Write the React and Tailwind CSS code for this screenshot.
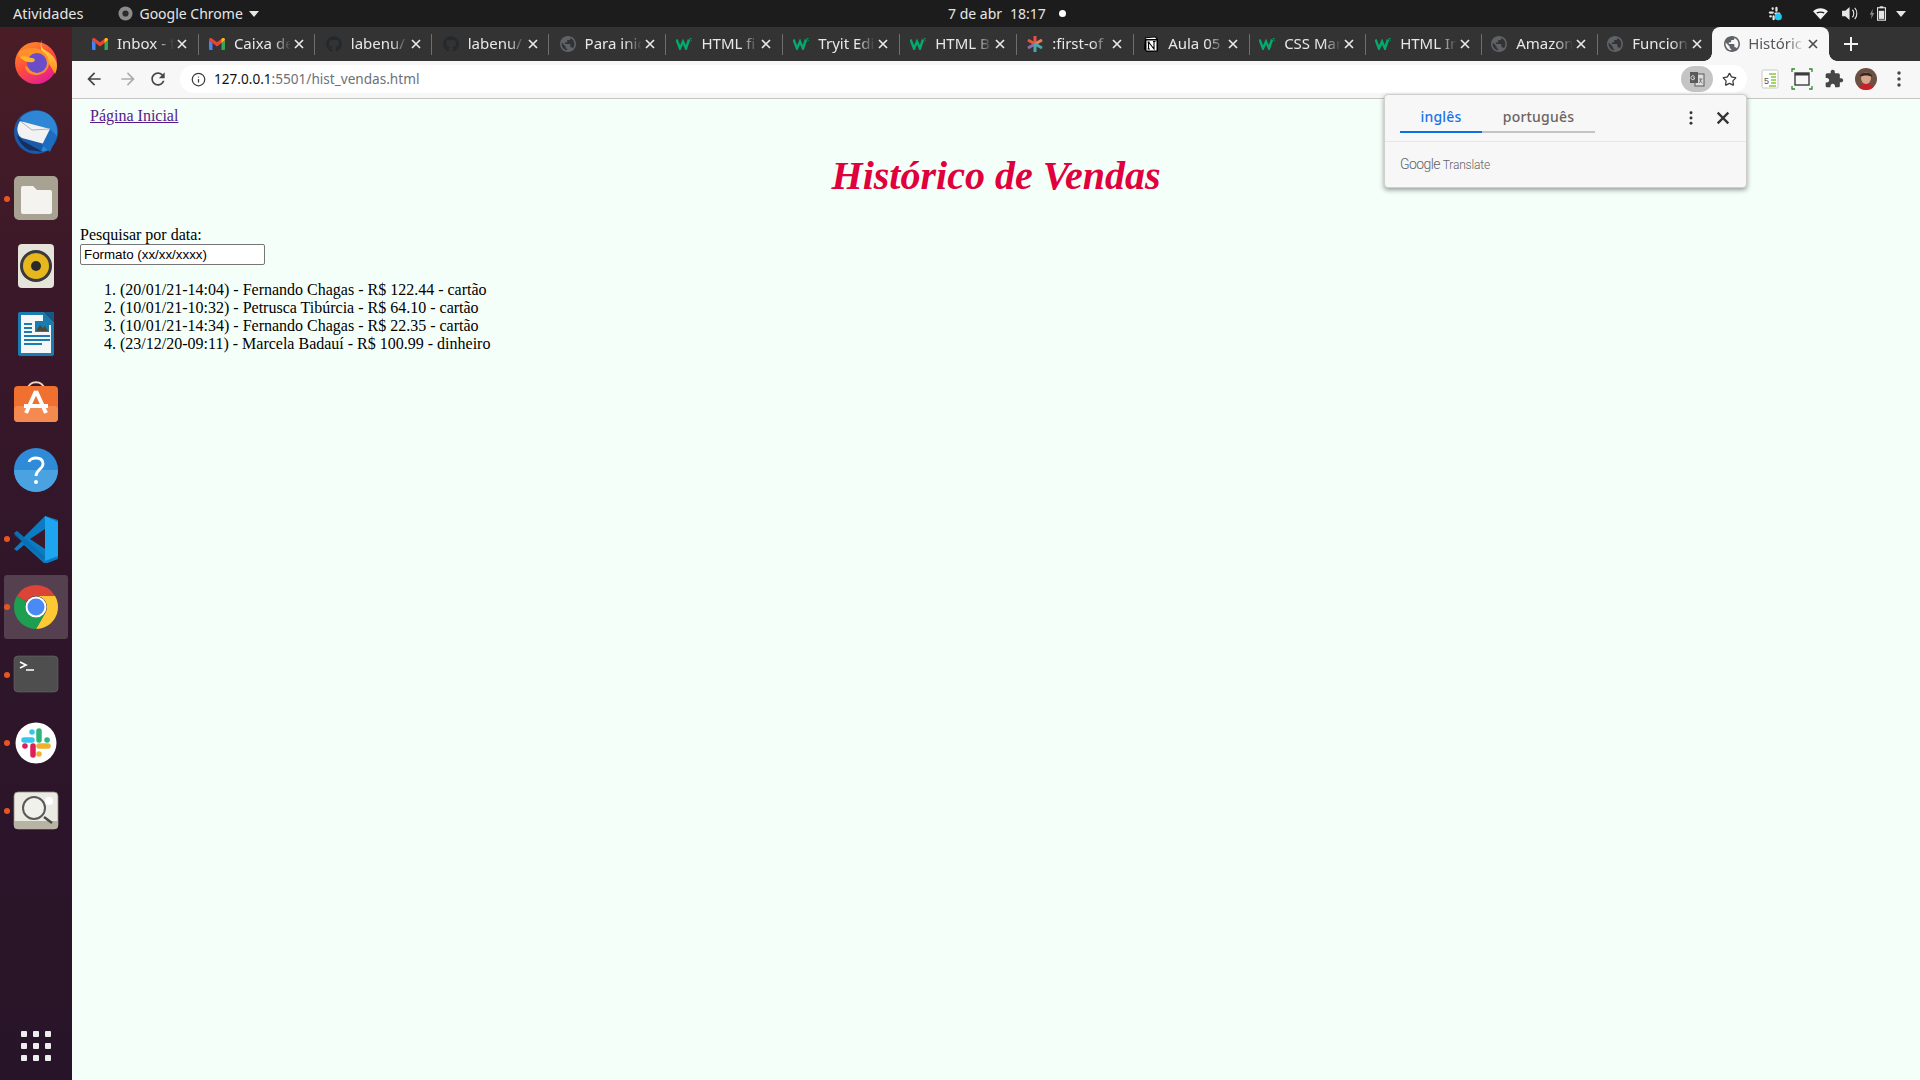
import React from 'react';
import { Star, Info } from 'lucide-react';
import { FaGithub } from 'react-icons/fa';

const GLOBE =
  'M12 2C6.48 2 2 6.48 2 12s4.48 10 10 10 10-4.48 10-10S17.52 2 12 2zm-1 17.93c-3.95-.49-7-3.85-7-7.93 0-.62.08-1.21.21-1.79L9 15v1c0 1.1.9 2 2 2v1.93zm6.9-2.54c-.26-.81-1-1.39-1.9-1.39h-1v-3c0-.55-.45-1-1-1H8v-2h2c.55 0 1-.45 1-1V7h2c1.1 0 2-.9 2-2v-.41c2.93 1.19 5 4.06 5 7.41 0 2.08-.8 3.97-2.1 5.39z';

const Globe = () => (
  <svg viewBox="2 2 20 20" className="w-4 h-4" fill="#5f6368">
    <path d={GLOBE} />
  </svg>
);

const Gmail = () => (
  <svg viewBox="0 0 16 12" className="w-4 h-3">
    <path d="M0 2v9a1 1 0 0 0 1 1h2.500V5z" fill="#4285f4" />
    <path d="M16 2v9a1 1 0 0 1-1 1h-2.500V5z" fill="#34a853" />
    <path d="M0 2c0-2 2-2.400 3-1.600L8 4.200 13 .4c1-.8 3-.4 3 1.600L12.500 5 8 8.400 3.500 5z" fill="#ea4335" />
    <path d="M12.500 1.100 13 .4c1-.8 3-.4 3 1.600l-3.500 3z" fill="#fbbc04" />
  </svg>
);

const W3 = () => (
  <svg viewBox="0 0 16 12" className="w-4 h-3">
    <path d="M0.500 1.500 4 10.500 7 3.500 10 10.500 13 1.500" fill="none" stroke="#04aa6d" strokeWidth="2.400" />
    <path d="M13.500 0.500h2l-1 1 1 1-1 .8" fill="none" stroke="#04aa6d" strokeWidth="0.700" />
  </svg>
);

const Snow = () => (
  <svg viewBox="0 0 16 16" className="w-4 h-4" strokeWidth="3">
    <path d="M8 0v8" stroke="#e8543f" />
    <path d="M1 4l7 4" stroke="#e8543f" />
    <path d="M15 4L8 8" stroke="#e87c5f" />
    <path d="M1 12l7-4" stroke="#8f6aa8" />
    <path d="M15 12L8 8" stroke="#4aa8a8" />
    <path d="M8 16V8" stroke="#4aa8a8" />
  </svg>
);

const Notion = () => (
  <svg viewBox="0 0 16 16" className="w-4 h-4">
    <path d="M2 1.500 12.500 .5 15 3v12.500L3.500 16 1 13z" fill="#000" />
    <path d="M3.500 4.500h10v10h-10zM2.500 2.200l9.500-.7 1.500 1.500h-10z" fill="#fff" />
    <path d="M5.500 13V6M5.500 6l5.500 7V5.500M4.500 13h2.500M4.500 6H6.500M10 5.500h2.500" stroke="#000" strokeWidth="1.100" fill="none" />
  </svg>
);

const Github = () => <FaGithub className="w-4 h-4 text-[#24292e]" />;

const tabs = [
  { title: 'Inbox - f', icon: <Gmail />, wide: true },
  { title: 'Caixa de', icon: <Gmail />, wide: true },
  { title: 'labenu/', icon: <Github />, wide: true },
  { title: 'labenu/', icon: <Github />, wide: true },
  { title: 'Para inic', icon: <Globe />, wide: true },
  { title: 'HTML fi', icon: <W3 />, wide: true },
  { title: 'Tryit Edi', icon: <W3 />, wide: true },
  { title: 'HTML B', icon: <W3 />, wide: true },
  { title: ':first-of', icon: <Snow /> },
  { title: 'Aula 05', icon: <Notion /> },
  { title: 'CSS Mar', icon: <W3 /> },
  { title: 'HTML In', icon: <W3 /> },
  { title: 'Amazon', icon: <Globe /> },
  { title: 'Funcion', icon: <Globe /> },
  { title: 'Históric', icon: <Globe />, active: true },
];

const sales = [
  '(20/01/21-14:04) - Fernando Chagas - R$ 122.44 - cartão',
  '(10/01/21-10:32) - Petrusca Tibúrcia - R$ 64.10 - cartão',
  '(10/01/21-14:34) - Fernando Chagas - R$ 22.35 - cartão',
  '(23/12/20-09:11) - Marcela Badauí - R$ 100.99 - dinheiro',
];

const CloseIcon = ({ color = '#e8e8e8', size = 'w-3 h-3' }) => (
  <svg viewBox="0 0 12 12" className={size} fill="none" stroke={color} strokeWidth="1.700">
    <path d="M2 2l8 8M10 2l-8 8" />
  </svg>
);

const Tab = ({ title, icon, active, wide, last }) => {
  if (active) {
    return (
      <div className="relative flex items-center shrink-0 h-full w-[117px] -ml-[4px] pl-[12px] bg-[#f7f7f7] rounded-t-[8px]">
        <div className="absolute -left-[8px] bottom-0 w-2 h-2 bg-[radial-gradient(circle_at_0_0,#333333_7.500px,#f7f7f7_8px)]" />
        <div className="absolute -right-[8px] bottom-0 w-2 h-2 bg-[radial-gradient(circle_at_100%_0,#333333_7.500px,#f7f7f7_8px)]" />
        <span className="flex justify-center w-4 shrink-0">{icon}</span>
        <span className="ml-[8px] w-[57px] pb-[2px] whitespace-nowrap text-[15px] text-[#55585c] [mask-image:linear-gradient(to_right,black_70%,transparent)]">
          {title}
        </span>
        <span className="flex justify-center w-4 shrink-0">
          <CloseIcon color="#4a4d50" />
        </span>
      </div>
    );
  }
  return (
    <div className={`flex items-center shrink-0 h-full pl-[7px] ${wide ? 'w-[116.9px]' : 'w-[116px]'}`}>
      <span className="flex justify-center w-4 shrink-0">{icon}</span>
      <span className="ml-[9px] w-[57px] pb-[2px] whitespace-nowrap text-[15px] text-[#e8e8e8] [mask-image:linear-gradient(to_right,black_70%,transparent)]">
        {title}
      </span>
      <span className="flex justify-center w-4 shrink-0">
        <CloseIcon />
      </span>
      {!last && <span className="ml-[7.500px] w-px h-[21px] bg-[#6e6e6e] shrink-0" />}
    </div>
  );
};

const TopBar = () => (
  <div className="flex items-center h-[27px] bg-[#1c1c1c] text-[#e6e6e6] text-[14px]">
    <div className="flex items-center w-[948px] shrink-0 pl-[13px]">
      <span className="text-[14.500px]">Atividades</span>
      <svg viewBox="0 0 16 16" className="w-[15px] h-[15px] ml-[35px]">
        <circle cx="8" cy="8" r="7.500" fill="#8b8b8b" />
        <circle cx="8" cy="8" r="3.300" fill="#2c2c2c" />
      </svg>
      <span className="ml-[6px]">Google Chrome</span>
      <svg viewBox="0 0 10 6" className="w-[10px] h-[6px] ml-[6px]" fill="#e6e6e6">
        <path d="M0 0h10L5 6z" />
      </svg>
    </div>
    <span>7 de abr</span>
    <span className="ml-[8px]">18:17</span>
    <span className="ml-[13px] w-[7px] h-[7px] rounded-full bg-white" />
    <div className="flex items-center ml-auto pr-[14px]">
      <svg viewBox="0 0 16 16" className="w-[15px] h-[15px]">
        <g stroke="#e6e6e6" strokeWidth="2.400" strokeLinecap="round">
          <path d="M5 2.500v.5M9 2v3M2 7h3M8 8h4M6 11v3M2.500 11h.5" />
        </g>
        <circle cx="11" cy="11.500" r="3.800" fill="#1ec8f0" />
      </svg>
      <svg viewBox="0 0 16 14" className="w-[15px] h-[13px] ml-[30px]" fill="#f2f2f2">
        <path d="M0 4.500C4.500.2 11.500.2 16 4.500L8 13.500z" />
        <path d="M3.500 6c2.500-1.500 6.500-1.500 9 0l-1 1c-2-1-5-1-7 0z" fill="#1c1c1c" />
      </svg>
      <svg viewBox="0 0 18 16" className="w-[17px] h-[15px] ml-[14px]" fill="#e6e6e6">
        <path d="M0 5h3.500L8 1v14l-4.500-4H0z" />
        <path d="M11 4c2 2 2 6 0 8M13.500 2c3 3 3 9 0 12" fill="none" stroke="#e6e6e6" strokeWidth="1.200" />
      </svg>
      <svg viewBox="0 0 8 14" className="w-[6px] h-[12px] ml-[10px]" fill="#8a8a8a">
        <path d="M5 0 1 8h2.500L2.500 14 7 5.500H4.500z" />
      </svg>
      <svg viewBox="0 0 10 16" className="w-[9px] h-[15px] ml-[2px]">
        <rect x="3" y="0" width="4" height="2" fill="#e6e6e6" />
        <rect x="0.600" y="1.600" width="8.800" height="13.800" fill="none" stroke="#e6e6e6" strokeWidth="1.200" />
        <rect x="2" y="5" width="6" height="9" fill="#e6e6e6" />
      </svg>
      <svg viewBox="0 0 10 6" className="w-[10px] h-[6px] ml-[10px]" fill="#e6e6e6">
        <path d="M0 0h10L5 6z" />
      </svg>
    </div>
  </div>
);

const TabStrip = () => (
  <div className="flex items-center h-[34px] bg-[#333333] pl-[13px]">
    {tabs.map((tab, i) => (
      <Tab key={i} {...tab} last={tabs[i + 1] && tabs[i + 1].active} />
    ))}
    <svg viewBox="0 0 14 14" className="w-[14px] h-[14px] ml-[15px]" fill="none" stroke="#f2f2f2" strokeWidth="2">
      <path d="M7 0v14M0 7h14" />
    </svg>
  </div>
);

const Toolbar = () => (
  <div className="flex items-center h-[38px] bg-[#f7f7f7] border-b border-[#c4c7c5] pb-px pl-[12px] pr-[19px]">
    <svg viewBox="0 0 24 24" className="w-5 h-5 shrink-0" fill="#454545">
      <path d="M20 11H7.830l5.590-5.590L12 4l-8 8 8 8 1.410-1.410L7.830 13H20v-2z" />
    </svg>
    <svg viewBox="0 0 24 24" className="w-5 h-5 ml-[14px] shrink-0 -scale-x-100" fill="#adadad">
      <path d="M20 11H7.830l5.590-5.590L12 4l-8 8 8 8 1.410-1.410L7.830 13H20v-2z" />
    </svg>
    <svg viewBox="0 0 24 24" className="w-5 h-5 ml-[10px] shrink-0" fill="#454545">
      <path d="M17.650 6.350C16.200 4.900 14.210 4 12 4c-4.420 0-7.990 3.580-7.990 8s3.570 8 7.990 8c3.730 0 6.840-2.550 7.730-6h-2.080c-.82 2.330-3.040 4-5.650 4-3.310 0-6-2.690-6-6s2.690-6 6-6c1.660 0 3.140.69 4.220 1.780L13 11h7V4l-2.350 2.350z" />
    </svg>
    <div className="flex items-center flex-1 h-[28px] ml-[12px] rounded-full bg-white pl-[11px] pr-[1px]">
      <Info className="w-[15px] h-[15px] text-[#3c3c3c]" strokeWidth={2} />
      <span className="ml-[8px] text-[13.600px] text-[#6b7177]">
        <span className="text-[#111]">127.0.0.1</span>:5501/hist_vendas.html
      </span>
      <div className="flex items-center justify-center w-[32px] h-[26px] ml-auto rounded-full bg-[#c4c4c4]">
        <svg viewBox="0 0 16 16" className="w-4 h-4">
          <rect x="6" y="3" width="9" height="12" fill="#dcdcdc" stroke="#5a5a5a" />
          <rect x="1" y="1" width="8" height="11" fill="#5a5a5a" />
          <path d="M7 5.500A2 2 0 1 0 7 8V6.800H5.500" transform="translate(-1.500 0)" fill="none" stroke="#dcdcdc" />
          <path d="M10 8h3.500M12 8c-.3 2-1 3-2 4M11 9c.5 1.500 1.200 2.200 2.500 3" fill="none" stroke="#5a5a5a" strokeWidth="0.800" />
        </svg>
      </div>
      <Star className="w-[15px] h-[15px] ml-[9px] mr-[9px] text-[#3c3c3c]" strokeWidth={2} />
    </div>
    <svg viewBox="0 0 22 22" className="w-[22px] h-[22px] ml-[12px] shrink-0">
      <rect x="3" y="2" width="16" height="18" rx="1.500" fill="#fff" stroke="#c8c8c8" />
      <path d="M10 6h7M12 9h5M12 12h5M12 15h5M10 18h7" stroke="#8cc63f" strokeWidth="1.500" />
      <text x="5" y="16" fontSize="9" fontFamily="Liberation Sans" fill="#555">5</text>
    </svg>
    <svg viewBox="0 0 22 22" className="w-[22px] h-[22px] ml-[10px] shrink-0" fill="none">
      <rect x="4" y="5" width="14" height="12" stroke="#3c3c3c" strokeWidth="1.400" />
      <path d="M4 5h14v2.500H4z" fill="#3c3c3c" />
      <path d="M1 4V1h3M18 1h3v3M21 18v3h-3M4 21H1v-3" stroke="#2e8b2e" strokeWidth="1.300" />
    </svg>
    <svg viewBox="0 0 24 24" className="w-[20px] h-[20px] mx-[11px] shrink-0" fill="#454545">
      <path d="M20.500 11H19V7c0-1.100-.9-2-2-2h-4V3.500C13 2.120 11.880 1 10.500 1S8 2.120 8 3.500V5H4c-1.100 0-1.990.9-1.990 2v3.800H3.500c1.490 0 2.700 1.210 2.700 2.700s-1.210 2.700-2.700 2.700H2V20c0 1.100.9 2 2 2h3.800v-1.500c0-1.490 1.210-2.700 2.700-2.700 1.490 0 2.700 1.210 2.700 2.700V22H17c1.100 0 2-.9 2-2v-4h1.500c1.380 0 2.500-1.120 2.500-2.500S21.880 11 20.500 11z" />
    </svg>
    <svg viewBox="0 0 22 22" className="w-[22px] h-[22px] shrink-0">
      <clipPath id="avatar">
        <circle cx="11" cy="11" r="11" />
      </clipPath>
      <g clipPath="url(#avatar)">
        <rect width="22" height="22" fill="#6b5044" />
        <path d="M2 22c1-5 5-6 9-6s8 1 9 6z" fill="#c8202c" />
        <ellipse cx="11" cy="10" rx="5" ry="6" fill="#d8a58c" />
        <path d="M5 9c0-6 12-6 12 0-3-2-9-2-12 0z" fill="#3a2820" />
      </g>
    </svg>
    <svg viewBox="0 0 4 16" className="w-1 h-4 ml-[20px] shrink-0" fill="#454545">
      <circle cx="2" cy="2" r="1.700" />
      <circle cx="2" cy="8" r="1.700" />
      <circle cx="2" cy="14" r="1.700" />
    </svg>
  </div>
);

const TranslatePopup = () => (
  <div className="absolute top-[94px] left-[1384px] w-[363px] h-[94px] rounded-[4px] border border-[#cfcfcf] bg-[#f7f7f7] shadow-[0_2px_5px_rgba(0,0,0,0.4)]">
    <div className="flex items-start h-[47px] pl-[15px] border-b border-[#e6e6e6]">
      <div className="flex w-[195px] h-[38px] border-b-2 border-[#c4c4c4]">
        <div className="w-[82px] h-[38px] border-b-2 border-[#0a6fe8] pt-[10px] text-center text-[14px] leading-[24px] font-medium tracking-[0.2px] text-[#1a73e8]">
          inglês
        </div>
        <div className="w-[113px] pt-[10px] text-center text-[14px] leading-[24px] font-medium tracking-[0.2px] text-[#6b6460]">
          português
        </div>
      </div>
      <svg viewBox="0 0 4 16" className="w-1 h-[14px] ml-[94px] mt-[16px]" fill="#333">
        <circle cx="2" cy="2" r="1.700" />
        <circle cx="2" cy="8" r="1.700" />
        <circle cx="2" cy="14" r="1.700" />
      </svg>
      <span className="ml-[22px] mt-[15px]">
        <CloseIcon color="#333" size="w-4 h-4" />
      </span>
    </div>
    <div className="flex items-baseline pl-[15px] pt-[13px] text-[#5f6368] leading-[18px] font-['Roboto',sans-serif]">
      <span className="text-[14px] font-light tracking-[-0.6px]">Google</span>
      <span className="ml-[3px] text-[12px] font-light tracking-[-0.2px]">Translate</span>
    </div>
  </div>
);

const Firefox = () => (
  <svg viewBox="0 0 48 48" className="w-[48px] h-[48px]">
    <defs>
      <linearGradient id="ffo" x1="0" y1="0" x2="0.600" y2="1">
        <stop offset="0" stopColor="#ff9a1f" />
        <stop offset="0.550" stopColor="#ff4d3d" />
        <stop offset="1" stopColor="#e5208f" />
      </linearGradient>
      <linearGradient id="ffy" x1="0" y1="0" x2="0" y2="1">
        <stop offset="0" stopColor="#ffe64d" />
        <stop offset="1" stopColor="#ff8a1f" />
      </linearGradient>
    </defs>
    <circle cx="24" cy="24" r="21" fill="url(#ffo)" />
    <path d="M30 1c-2 6 0 9 6 12 6 4 9 9 9 14 0 3-1 6-2 8l-14-24c0-4-1-7 1-10z" fill="url(#ffy)" />
    <path d="M6 14c4-3 8-5 14-5 9 0 17 6 17 15 0 7-6 12-13 12-6 0-11-4-11-9 4 2 8 0 8-3l-5-2c-4 0-8-2-10-8z" fill="#ff8f2a" />
    <circle cx="25" cy="24" r="10" fill="#6b4cc9" />
    <path d="M8 18c5-2 9 1 12 1 3 0 4 3 1 4-4 1-8 0-13-5z" fill="#ffb52e" />
  </svg>
);

const Thunderbird = () => (
  <svg viewBox="0 0 48 48" className="w-[48px] h-[48px]">
    <circle cx="24" cy="25" r="22" fill="#1a5aa8" />
    <path d="M8 12c6-8 18-11 28-5 7 5 10 12 9 22l-8 14-8 2 4-12z" fill="#2f86d4" />
    <path d="M8 14l30 8-2 16-26-7c-4-2-7-9-2-17z" fill="#f2f2f2" />
    <path d="M8 14l12 9 18-1" fill="none" stroke="#aab4c0" strokeWidth="1" />
    <path d="M30 38l8 7 7-16-7-7z" fill="#1c6cc0" />
    <path d="M5 28c2 7 6 12 12 15l14 2-20-11z" fill="#162e5e" />
  </svg>
);

const Files = () => (
  <svg viewBox="0 0 48 48" className="w-[48px] h-[48px]">
    <rect x="2" y="1" width="44" height="44" rx="5" fill="#a8a293" />
    <path d="M9 13a2 2 0 0 1 2-2h10l4 4h13a2 2 0 0 1 2 2v20a2 2 0 0 1-2 2H11a2 2 0 0 1-2-2z" fill="#f5f3f0" />
  </svg>
);

const Rhythmbox = () => (
  <svg viewBox="0 0 48 48" className="w-[48px] h-[48px]">
    <rect x="6" y="1" width="36" height="44" rx="4" fill="#e6e3da" />
    <circle cx="24" cy="23" r="16" fill="#3a3a3a" />
    <circle cx="24" cy="23" r="13" fill="#e7b71e" />
    <circle cx="24" cy="23" r="5" fill="#2a2a2a" />
  </svg>
);

const Writer = () => (
  <svg viewBox="0 0 48 48" className="w-[48px] h-[48px]">
    <path d="M8 1h24l10 10v32a2 2 0 0 1-2 2H8a2 2 0 0 1-2-2V3a2 2 0 0 1 2-2z" fill="#1b7cb0" />
    <path d="M9 4h22v10h8v28H9z" fill="#f4f6f8" />
    <path d="M32 1h10v10z" fill="#125a85" />
    <path d="M12 13h8M12 17h8M12 21h8M12 25h26M12 29h26M12 33h18" stroke="#1b7cb0" strokeWidth="1.800" />
    <rect x="23" y="10" width="14" height="11" fill="#1b7cb0" />
    <path d="M24 20l4-6 3 3 2-2 3 5z" fill="#4a4a3a" />
  </svg>
);

const AppStore = () => (
  <svg viewBox="0 0 48 48" className="w-[48px] h-[48px]">
    <path d="M16 10c0-9 16-9 16 0" fill="none" stroke="#e8d9c0" strokeWidth="2" />
    <rect x="2" y="7" width="44" height="36" rx="4" fill="#f07030" />
    <rect x="2" y="27" width="44" height="16" rx="4" fill="#f48a50" />
    <path d="M24 12 14 34M24 12l10 22M12 27h24" stroke="#fff" strokeWidth="4" fill="none" />
  </svg>
);

const Help = () => (
  <svg viewBox="0 0 48 48" className="w-[48px] h-[48px]">
    <circle cx="24" cy="23" r="22" fill="#2f8bd8" />
    <path d="M2 23a22 22 0 0 0 44 0z" fill="#4aa3e0" />
    <path d="M17 15c1-5 13-6 14 1 1 6-7 6-7 13" fill="none" stroke="#fff" strokeWidth="2.800" />
    <circle cx="24" cy="35" r="2" fill="#fff" />
  </svg>
);

const VSCode = () => (
  <svg viewBox="0 0 48 48" className="w-[48px] h-[48px]">
    <path d="M33 1 12 22l-7-6-3 2 8 8-8 8 3 2 7-6 21 19 13-5V5z" fill="#0a7cc4" />
    <path d="M33 1l13 6v34l-13 5z" fill="#1ea5f0" />
    <path d="M33 14v20L18 24z" fill="#3c1a2c" />
    <path d="M5 16l28 26-2 3L2 20z" fill="#0a68a8" opacity="0.600" />
  </svg>
);

const Chrome = () => (
  <svg viewBox="0 0 48 48" className="w-[48px] h-[48px]">
    <path d="M24 2A22 22 0 0 1 43.050 13H24A11 11 0 0 0 14.500 18.500L4.950 13A22 22 0 0 1 24 2z" fill="#db4437" />
    <path d="M43.050 13A22 22 0 0 1 24 46L33.500 29.500A11 11 0 0 0 24 13z" fill="#fcc934" />
    <path d="M4.950 13A22 22 0 0 0 24 46L33.500 29.500A11 11 0 0 1 14.500 18.500z" fill="#1e9e50" />
    <circle cx="24" cy="24" r="10.500" fill="#fff" />
    <circle cx="24" cy="24" r="8.500" fill="#4a8af4" />
  </svg>
);

const Terminal = () => (
  <svg viewBox="0 0 48 48" className="w-[48px] h-[48px]">
    <rect x="2" y="5" width="44" height="36" rx="4" fill="#4e4e4e" stroke="#6a6a6a" strokeWidth="0.600" />
    <path d="M8 11l6 3-6 3M14 19h8" fill="none" stroke="#fff" strokeWidth="1.700" />
  </svg>
);

const Slack = () => (
  <svg viewBox="0 0 48 48" className="w-[48px] h-[48px]">
    <circle cx="24" cy="24" r="20.500" fill="#fff" />
    <g strokeWidth="5.500" strokeLinecap="round" fill="none">
      <path d="M12 21h8M20 13v.1" stroke="#36c5f0" />
      <path d="M27 12v9M35 21h.1" stroke="#2eb67d" />
      <path d="M36 27h-9M27 35v.1" stroke="#ecb22e" />
      <path d="M21 36v-9M13 27h-.1" stroke="#e01e5a" />
    </g>
  </svg>
);

const Viewer = () => (
  <svg viewBox="0 0 48 48" className="w-[48px] h-[48px]">
    <rect x="2" y="5" width="44" height="37" rx="4" fill="#ecebe3" stroke="#8f8b7e" strokeWidth="0.800" />
    <path d="M2 34h44v4a4 4 0 0 1-4 4H6a4 4 0 0 1-4-4z" fill="#b8b4a3" />
    <circle cx="37" cy="14" r="4" fill="#fff" />
    <path d="M32 30l8 6" stroke="#4a4a4a" strokeWidth="2.500" />
    <circle cx="22" cy="21" r="11" fill="#f4f3ee" fillOpacity="0.700" stroke="#5a5a5a" strokeWidth="2" />
  </svg>
);

const dockApps = [
  { icon: <Firefox /> },
  { icon: <Thunderbird /> },
  { icon: <Files />, running: true },
  { icon: <Rhythmbox /> },
  { icon: <Writer /> },
  { icon: <AppStore /> },
  { icon: <Help /> },
  { icon: <VSCode />, running: true },
  { icon: <Chrome />, running: true, focused: true },
  { icon: <Terminal />, running: true },
  { icon: <Slack />, running: true },
  { icon: <Viewer />, running: true },
];

const Dock = () => (
  <div className="flex flex-col w-[72px] shrink-0 pt-[2px] bg-[linear-gradient(to_bottom,#4a1d26_0%,#3a1829_25%,#2e152a_60%,#281428_100%)]">
    {dockApps.map((app, i) => (
      <div key={i} className="relative flex items-center justify-center h-[68px]">
        {app.focused && <div className="absolute left-[4px] right-[4px] top-[2px] bottom-[2px] rounded-[3px] bg-[#55404f]" />}
        {app.running && <span className="absolute left-[4px] top-[31px] w-[6px] h-[6px] rounded-full bg-[#e95420]" />}
        <span className="relative">{app.icon}</span>
      </div>
    ))}
    <div className="grid grid-cols-3 gap-[6px] w-[30px] mt-auto mb-[19px] mx-auto">
      {Array.from({ length: 9 }).map((_, i) => (
        <span key={i} className="w-[6px] h-[6px] rounded-[1px] bg-[#eeeeee]" />
      ))}
    </div>
  </div>
);

const Page = () => (
  <div className="flex-1 bg-[#f5fffa] pt-2 pl-2 text-black text-[16px] leading-[18px] font-['Liberation_Serif',serif]">
    <a href="#" className="block ml-[10px] text-[#551a8b] underline">
      Página Inicial
    </a>
    <h1 className="mt-[28px] mb-[27px] pr-2 text-center text-[40px] leading-[46px] font-bold italic text-[#e0003c]">
      Histórico de Vendas
    </h1>
    <div>Pesquisar por data:</div>
    <input
      readOnly
      value="Formato (xx/xx/xxxx)"
      className="block w-[185px] h-[21px] px-[3px] border border-[#767676] rounded-[2px] bg-white text-[13.333px] font-['Liberation_Sans',sans-serif]"
    />
    <ol className="mt-4 pl-10 list-decimal">
      {sales.map((sale, i) => (
        <li key={i}>{sale}</li>
      ))}
    </ol>
  </div>
);

const App = () => (
  <div className="relative flex flex-col w-[1920px] h-[1080px] overflow-hidden font-['Noto_Sans',sans-serif]">
    <TopBar />
    <div className="flex flex-1 min-h-0">
      <Dock />
      <div className="flex flex-col flex-1 min-w-0">
        <TabStrip />
        <Toolbar />
        <Page />
      </div>
    </div>
    <TranslatePopup />
  </div>
);

export default App;
